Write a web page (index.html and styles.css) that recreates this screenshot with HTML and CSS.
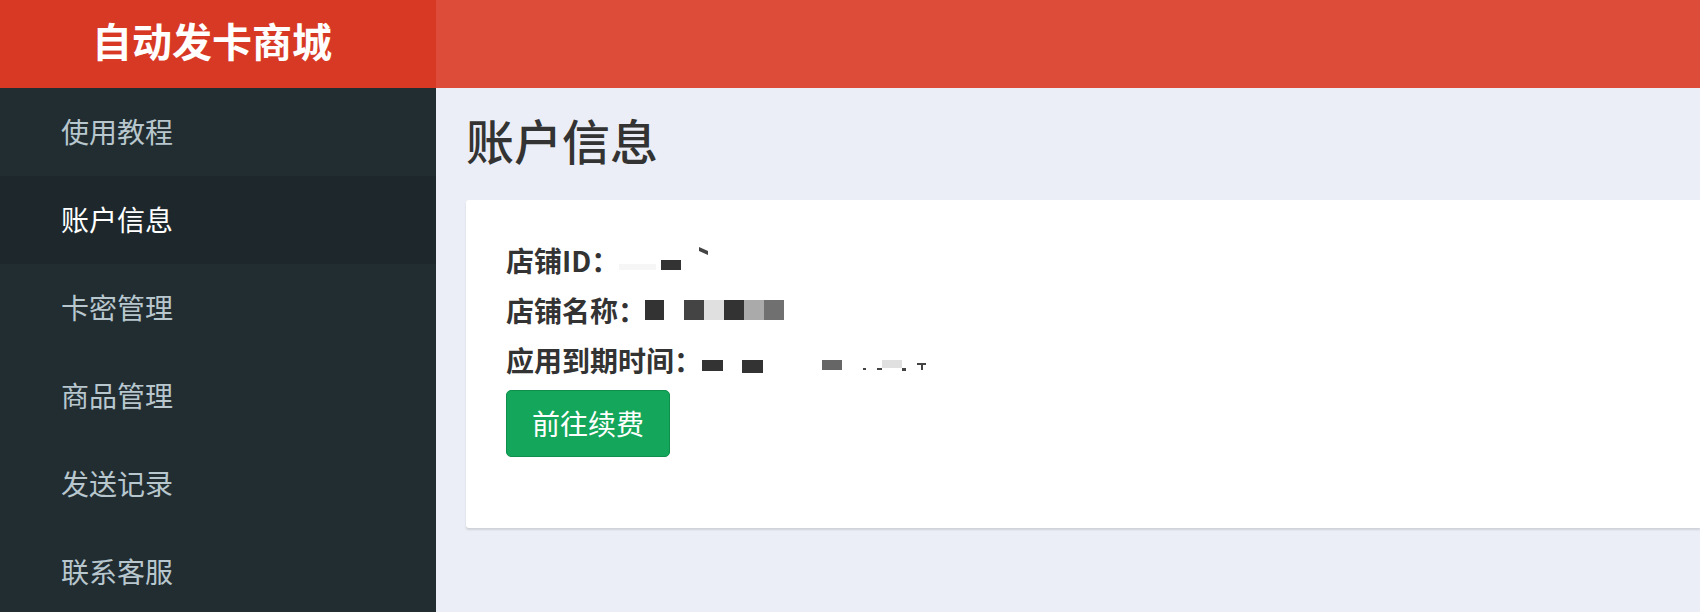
FILE: index.html
```html
<!DOCTYPE html>
<html lang="zh-CN">
<head>
<meta charset="utf-8">
<title>账户信息 - 自动发卡商城</title>
<link rel="stylesheet" href="styles.css">
</head>
<body>
<header class="topbar">
  <div class="logo">自动发卡商城</div>
  <div class="navbar"></div>
</header>
<div class="main">
  <nav class="sidebar">
    <a class="nav-item">使用教程</a>
    <a class="nav-item active">账户信息</a>
    <a class="nav-item">卡密管理</a>
    <a class="nav-item">商品管理</a>
    <a class="nav-item">发送记录</a>
    <a class="nav-item">联系客服</a>
  </nav>
  <section class="content">
    <h1 class="page-title">账户信息</h1>
    <div class="card">
      <div class="row">
        <span class="label">店铺ID：</span>
        <span class="blur">
          <i class="id-a"></i><i class="id-b"></i><i class="id-c"></i>
        </span>
      </div>
      <div class="row">
        <span class="label">店铺名称：</span>
        <span class="blur">
          <i class="nm-a"></i><i class="nm-b"></i><i class="nm-c"></i><i class="nm-d"></i><i class="nm-e"></i><i class="nm-f"></i>
        </span>
      </div>
      <div class="row">
        <span class="label">应用到期时间：</span>
        <span class="blur">
          <i class="tm-a"></i><i class="tm-b"></i><i class="tm-c"></i><i class="tm-d"></i><i class="tm-e"></i><i class="tm-f"></i><i class="tm-g"></i><i class="tm-h"></i>
        </span>
      </div>
      <button class="btn-renew">前往续费</button>
    </div>
  </section>
</div>
</body>
</html>
```

FILE: styles.css
```css
* { box-sizing: border-box; }
html, body {
  margin: 0;
  padding: 0;
  height: 100%;
  overflow: hidden;
  font-family: "Noto Sans CJK SC", "Noto Sans", sans-serif;
  background: #ebeef6;
}
.topbar {
  display: flex;
  height: 88px;
}
.logo {
  width: 436px;
  flex: none;
  background: #d73925;
  color: #fff;
  font-size: 40px;
  font-weight: 700;
  display: flex;
  align-items: center;
  justify-content: center;
  padding-bottom: 8px;
  padding-right: 12px;
}
.navbar {
  flex: 1;
  background: #dd4b39;
}
.main {
  display: flex;
  height: calc(100% - 88px);
}
.sidebar {
  width: 436px;
  flex: none;
  background: #222d32;
  display: flex;
  flex-direction: column;
}
.nav-item {
  flex: none;
  height: 88px;
  display: flex;
  align-items: center;
  padding-left: 61px;
  font-size: 28px;
  color: #b8c7ce;
  padding-bottom: 2px;
}
.nav-item.active {
  background: #1e282c;
  color: #fff;
}
.content {
  flex: 1;
  padding-left: 30px;
  min-width: 0;
}
.page-title {
  margin: 23px 0 33px;
  font-size: 48px;
  line-height: 56px;
  font-weight: 500;
  color: #333;
}
.card {
  background: #fff;
  border-radius: 3px 0 0 3px;
  box-shadow: 0 2px 2px rgba(0, 0, 0, 0.12);
  padding: 35px 0 71px 40px;
}
.row {
  display: flex;
  align-items: flex-start;
  height: 50px;
}
.label {
  font-size: 28px;
  line-height: 50px;
  font-weight: 700;
  color: #333;
}
.blur {
  display: flex;
  align-items: flex-start;
}
.blur i { display: block; flex: none; }

.id-a { width: 37px; height: 6px; margin-top: 29px; background: #f6f6f6; }
.id-b { width: 20px; height: 10px; margin-top: 25px; margin-left: 5px; background: #333; }
.id-c { width: 9px; height: 4px; margin-top: 14px; margin-left: 18px; background: #444; transform: skewY(25deg); }

.nm-a { width: 19px; height: 20px; margin-top: 15px; margin-left: -1px; background: #333; }
.nm-b { width: 20px; height: 20px; margin-top: 15px; margin-left: 20px; background: #444; }
.nm-c { width: 20px; height: 20px; margin-top: 15px; background: #e0e0e0; }
.nm-d { width: 20px; height: 20px; margin-top: 15px; background: #333; }
.nm-e { width: 20px; height: 20px; margin-top: 15px; background: #aaa; }
.nm-f { width: 20px; height: 20px; margin-top: 15px; background: #707070; }

.tm-a { width: 21px; height: 11px; margin-top: 25px; background: #333; }
.tm-b { width: 21px; height: 13px; margin-top: 25px; margin-left: 19px; background: #333; }
.tm-c { width: 20px; height: 10px; margin-top: 25px; margin-left: 59px; background: #666; }
.tm-d { width: 3px; height: 2px; margin-top: 33px; margin-left: 21px; background: #444; }
.tm-e { width: 5px; height: 2px; margin-top: 33px; margin-left: 11px; background: #444; }
.tm-f { width: 20px; height: 8px; margin-top: 25px; background: #e0e0e0; }
.tm-g { width: 4px; height: 3px; margin-top: 33px; background: #444; }
.tm-h {
  width: 9px; height: 7px; margin-top: 28px; margin-left: 11px;
  border-top: 2px solid #444;
  background: linear-gradient(#444, #444) center / 2px 100% no-repeat;
}

.btn-renew {
  margin-top: 5px;
  width: 164px;
  height: 67px;
  background: #14a65a;
  border: 1px solid #0e8f4b;
  border-radius: 5px;
  color: #fff;
  font-family: "Noto Sans CJK SC", "Noto Sans", sans-serif;
  font-size: 28px;
  padding: 0;
  display: flex;
  align-items: center;
  justify-content: center;
  padding-bottom: 2px;
}
```
